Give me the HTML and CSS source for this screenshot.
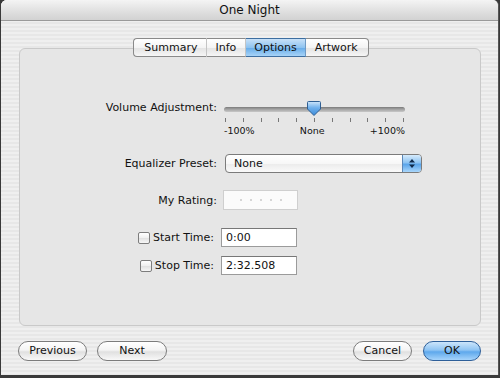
FILE: index.html
```html
<!DOCTYPE html>
<html>
<head>
<meta charset="utf-8">
<link rel="stylesheet" href="styles.css">
</head>
<body>
<div class="window">
  <div class="titlebar">One Night</div>
  <div class="content">
    <div class="tabs">
      <div class="tab">Summary</div>
      <div class="tab">Info</div>
      <div class="tab active">Options</div>
      <div class="tab last">Artwork</div>
    </div>
    <div class="group">
      <div class="row row-volume">
        <div class="label">Volume Adjustment:</div>
        <div class="slider">
          <div class="track"></div>
          <svg class="thumb" width="16" height="17" viewBox="0 0 16 17">
            <defs>
              <linearGradient id="tg" x1="0" y1="0" x2="0" y2="1">
                <stop offset="0" stop-color="#cfe6fb"/>
                <stop offset="0.45" stop-color="#6fb0ec"/>
                <stop offset="1" stop-color="#3b8ad8"/>
              </linearGradient>
            </defs>
            <path d="M2.5 1.5 H13.5 Q14.5 1.5 14.5 2.5 V9 L8 15.5 L1.5 9 V2.5 Q1.5 1.5 2.5 1.5 Z" fill="url(#tg)" stroke="#2f5f93" stroke-width="1"/>
          </svg>
          <div class="ticks">
            <i></i><i></i><i></i><i></i><i></i><i></i><i></i><i></i><i></i><i></i><i></i>
          </div>
          <div class="ticklabels">
            <span>-100%</span><span>None</span><span>+100%</span>
          </div>
        </div>
      </div>
      <div class="row row-eq">
        <div class="label">Equalizer Preset:</div>
        <div class="popup">
          <span class="popup-text">None</span>
          <span class="popup-arrows">
            <svg width="8" height="11" viewBox="0 0 8 11"><path d="M4 1 L7 4.5 H1 Z M4 10 L7 6.5 H1 Z" fill="#102a4a"/></svg>
          </span>
        </div>
      </div>
      <div class="row row-rating">
        <div class="label">My Rating:</div>
        <div class="rating"><i></i><i></i><i></i><i></i><i></i></div>
      </div>
      <div class="row row-start">
        <div class="label"><span class="check"></span>Start Time:</div>
        <div class="field">0:00</div>
      </div>
      <div class="row row-stop">
        <div class="label"><span class="check"></span>Stop Time:</div>
        <div class="field">2:32.508</div>
      </div>
    </div>
    <div class="buttons">
      <div class="left">
        <div class="btn btn-prev">Previous</div>
        <div class="btn btn-next">Next</div>
      </div>
      <div class="right">
        <div class="btn btn-cancel">Cancel</div>
        <div class="btn btn-ok">OK</div>
      </div>
    </div>
  </div>
</div>
</body>
</html>
```
FILE: styles.css
```css
* { box-sizing: border-box; }
html, body { margin: 0; padding: 0; }
body {
  width: 500px;
  height: 378px;
  background: #3a3a3a;
  font-family: "DejaVu Sans", "Lucida Grande", sans-serif;
  font-size: 11px;
  color: #111;
  overflow: hidden;
}
.window {
  margin-left: 1px;
  width: 498px;
  height: 375px;
  border-radius: 6px 6px 0 0;
  background-color: #ececec;
  background-image: repeating-linear-gradient(to bottom, #efefef 0, #efefef 2px, #e7e7e7 2px, #e7e7e7 4px);
  border-right: 1px solid #555;
  overflow: hidden;
}
.titlebar {
  height: 21px;
  line-height: 21px;
  text-align: center;
  font-size: 12px;
  background: linear-gradient(to bottom, #f4f4f4 0%, #e2e2e2 50%, #d2d2d2 100%);
  border-bottom: 1px solid #9a9a9a;
}
.content {
  padding: 17px 17px 0 17px;
}
.tabs {
  display: flex;
  justify-content: center;
  position: relative;
  z-index: 1;
  margin-bottom: -9px;
  margin-left: 3px;
}
.tab {
  height: 19px;
  line-height: 17px;
  padding: 0 8.5px;
  border: 1px solid #8a8a8a;
  border-right: 1px solid #c4c4c4;
  border-left: none;
  background: linear-gradient(to bottom, #ffffff 0%, #f4f4f4 50%, #e4e4e4 55%, #f6f6f6 100%);
}
.tab:first-child {
  border-left: 1px solid #8a8a8a;
  border-radius: 4px 0 0 4px;
  padding-left: 10px;
}
.tab.last {
  border-right: 1px solid #8a8a8a;
  border-radius: 0 4px 4px 0;
  padding-right: 10px;
}
.tab.active {
  background: linear-gradient(to bottom, #c8e1f8 0%, #8ec3f0 50%, #6aaeea 55%, #a7d3f7 100%);
  border-top-color: #3d6ea0;
  border-bottom-color: #3d6ea0;
  border-right-color: #6f9ac4;
}
.group {
  height: 278px;
  margin-left: 1px;
  border: 1px solid #c9c9c9;
  border-radius: 6px;
  background: #e6e6e6;
  padding-top: 46px;
}
.row {
  display: flex;
  align-items: center;
}
.label {
  width: 197px;
  text-align: right;
  display: flex;
  justify-content: flex-end;
  align-items: center;
  flex: none;
}
.row-volume { align-items: flex-start; }
.row-volume .label { margin-top: 6px; }
.slider {
  position: relative;
  margin-left: 7px;
  width: 181px;
  height: 59px;
}
.track {
  margin-top: 12px;
  height: 5px;
  border-radius: 3px;
  background: linear-gradient(to bottom, #7a7a7a 0%, #9e9e9e 40%, #c8c8c8 100%);
}
.thumb {
  position: absolute;
  left: 82px;
  top: 5px;
}
.ticks {
  display: flex;
  justify-content: space-between;
  margin-top: 6px;
  padding: 0 1px;
}
.ticks i {
  display: block;
  width: 1px;
  height: 4px;
  background: #777;
}
.ticklabels {
  display: flex;
  justify-content: space-between;
  font-size: 9.5px;
  margin-top: 3px;
}
.popup {
  margin-left: 8px;
  width: 197px;
  height: 19px;
  border: 1px solid #7b7b7b;
  border-radius: 4px;
  background: linear-gradient(to bottom, #ffffff 0%, #f7f7f7 50%, #ececec 55%, #fafafa 100%);
  display: flex;
  align-items: center;
  overflow: hidden;
}
.popup-text { flex: 1; padding-left: 8px; }
.popup-arrows {
  width: 19px;
  height: 100%;
  display: flex;
  align-items: center;
  justify-content: center;
  border-left: 1px solid #5b87b8;
  background: linear-gradient(to bottom, #d6ebfc 0%, #8cc3f2 45%, #5aa5ea 55%, #a9d6fb 100%);
}
.row-rating { margin-top: 17px; }
.rating {
  margin-left: 6px;
  width: 75px;
  height: 20px;
  border: 1px solid #cfcfcf;
  background: #fbfbfb;
  display: flex;
  align-items: center;
  justify-content: center;
  gap: 8px;
}
.rating i {
  display: block;
  width: 2px;
  height: 2px;
  background: #c8c8c8;
  border-radius: 1px;
}
.row-start { margin-top: 18px; }
.row-stop { margin-top: 9px; }
.check {
  width: 12px;
  height: 12px;
  border: 1px solid #7d7d7d;
  border-radius: 2px;
  background: linear-gradient(to bottom, #ffffff 0%, #efefef 50%, #e2e2e2 55%, #f7f7f7 100%);
  margin-right: 3px;
}
.row-start .label, .row-stop .label { padding-right: 3px; }
.field {
  margin-left: 4px;
  width: 76px;
  height: 19px;
  border: 1px solid #9b9b9b;
  border-top-color: #777;
  background: #fff;
  padding-left: 4px;
  line-height: 17px;
}
.buttons {
  display: flex;
  justify-content: space-between;
  margin-top: 15px;
}
.left { display: flex; gap: 10px; }
.right { display: flex; gap: 11px; }
.btn {
  height: 20px;
  line-height: 18px;
  text-align: center;
  border: 1px solid #7c7c7c;
  border-radius: 10px;
  background: linear-gradient(to bottom, #ffffff 0%, #f4f4f4 45%, #e0e0e0 55%, #f8f8f8 100%);
}
.btn-prev { width: 69px; }
.btn-next { width: 70px; }
.btn-cancel { width: 59px; }
.btn-ok {
  width: 58px;
  border-color: #2e5f99;
  background: linear-gradient(to bottom, #cce5fb 0%, #8ec4f3 45%, #5ea8ec 55%, #a6d4fb 100%);
}
```
